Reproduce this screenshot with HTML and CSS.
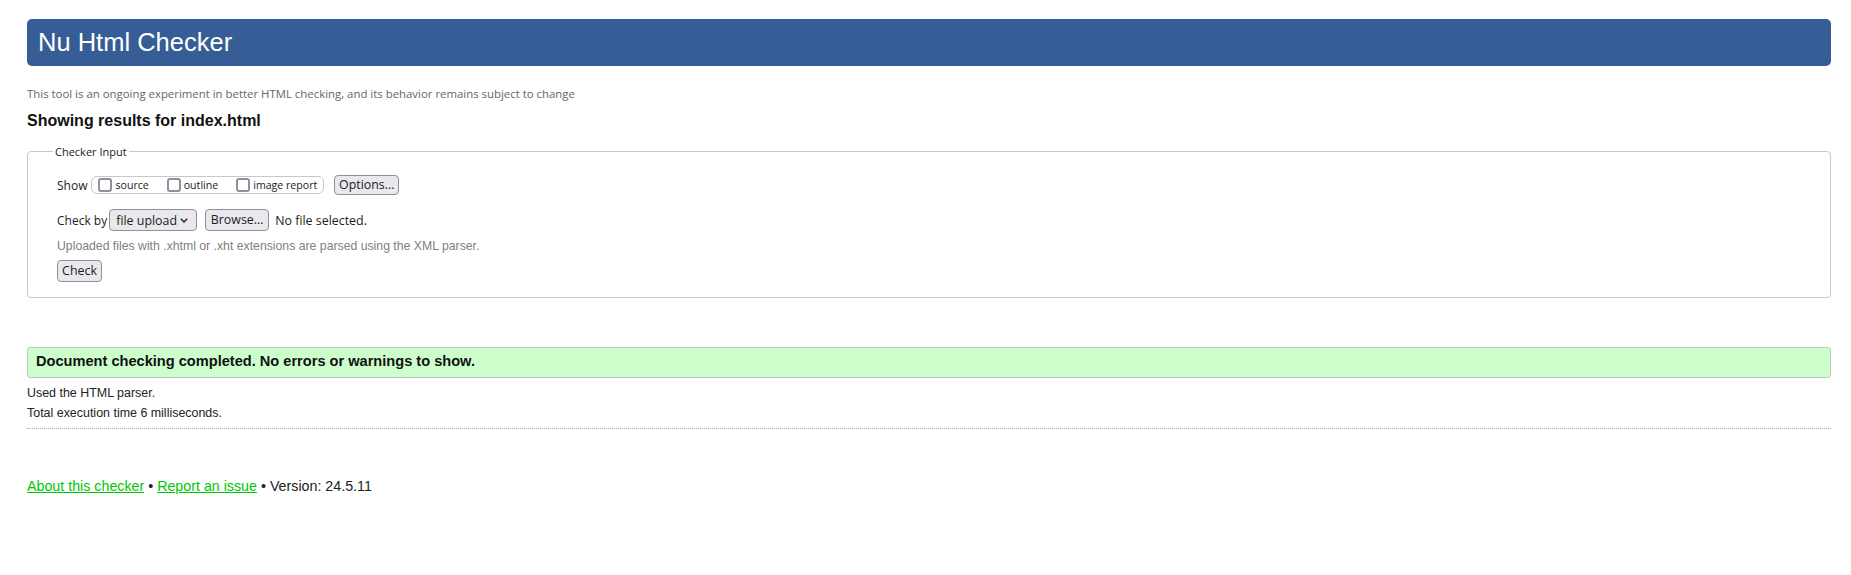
FILE: index.html
```html
<!DOCTYPE html>
<html lang="en">
<head>
<meta charset="utf-8">
<title>Showing results for index.html - Nu Html Checker</title>
<link rel="stylesheet" href="styles.css">
</head>
<body>
<h1 class="title">Nu Html Checker</h1>
<p class="tagline">This tool is an ongoing experiment in better HTML checking, and its behavior remains subject to change</p>
<h2 class="results-for">Showing results for index.html</h2>
<form class="checker-form">
  <fieldset class="checker-input">
    <legend class="legend">Checker Input</legend>
    <div class="row show-row">
      <span class="row-label">Show</span>
      <span class="option-group">
        <label class="option"><input class="cb" type="checkbox">source</label>
        <label class="option"><input class="cb" type="checkbox">outline</label>
        <label class="option"><input class="cb" type="checkbox">image report</label>
      </span>
      <button type="button" class="btn btn-options">Options...</button>
    </div>
    <div class="row checkby-row">
      <span class="row-label">Check by</span>
      <span class="select">file upload
        <svg class="chev" width="8" height="5" viewBox="0 0 8 5"><path d="M0.8 0.8 L4 4 L7.2 0.8" fill="none" stroke="#1c1b22" stroke-width="1.3"/></svg>
      </span>
      <button type="button" class="btn btn-browse">Browse...</button>
      <span class="file-status">No file selected.</span>
    </div>
    <p class="hint">Uploaded files with .xhtml or .xht extensions are parsed using the XML parser.</p>
    <button type="button" class="btn btn-check">Check</button>
  </fieldset>
</form>
<div class="success">Document checking completed. No errors or warnings to show.</div>
<p class="details">Used the HTML parser.</p>
<p class="details">Total execution time 6 milliseconds.</p>
<hr class="rule">
<p class="footer"><a href="#">About this checker</a> • <a href="#">Report an issue</a> • Version: 24.5.11</p>
</body>
</html>
```
FILE: styles.css
```css
* { box-sizing: border-box; }
html, body { margin: 0; padding: 0; background: #fff; }
body {
  padding: 19px 20px 40px 27px;
  font-family: "Liberation Sans", Arial, sans-serif;
  font-size: 12px;
  color: #222;
}
.title {
  margin: 0;
  height: 47px;
  padding: 0 11px;
  background: #365d95;
  color: #fff;
  border-radius: 5px;
  font: 400 25.5px/47px "Liberation Sans", Arial, sans-serif;
}
.tagline {
  margin: 20px 0 0;
  font: 11.4px/15px "Open Sans", sans-serif;
  color: #666;
}
.results-for {
  margin: 11px 0 0;
  font: bold 16px/18px "Liberation Sans", Arial, sans-serif;
  color: #111;
}
.checker-form { margin: 0; }
.checker-input {
  margin: 14px 0 0;
  padding: 0 20px 15px 29px;
  border: 1px solid #c8c8c8;
  border-radius: 4px;
  min-width: 0;
}
.legend {
  padding: 0 2px;
  margin-left: -4px;
  font: 11px/15px "Open Sans", sans-serif;
  color: #222;
}
.row {
  display: flex;
  align-items: center;
  font-family: "Open Sans", sans-serif;
  white-space: nowrap;
}
.row-label { font-size: 12px; color: #222; }
.show-row { margin-top: 16px; height: 20px; }
.show-row .row-label { margin-right: 4px; }
.option-group {
  display: flex;
  align-items: center;
  flex-shrink: 0;
  gap: 18px;
  height: 18px;
  padding: 0 6px;
  border: 1px solid #c8c8c8;
  border-radius: 6px;
}
.option {
  display: flex;
  align-items: center;
  flex-shrink: 0;
  gap: 3px;
  font-size: 10.6px;
  color: #222;
}
.cb {
  appearance: none;
  -webkit-appearance: none;
  flex-shrink: 0;
  margin: 0;
  width: 14px;
  height: 14px;
  border: 2px solid #8f8f9d;
  border-radius: 3px;
  background: #fff;
}
.btn {
  appearance: none;
  flex-shrink: 0;
  font-family: "Open Sans", sans-serif;
  font-size: 12.4px;
  color: #1c1b22;
  background: #e9e9ed;
  border: 1px solid #8f8f9d;
  border-radius: 4px;
  padding: 0;
  line-height: 1;
  text-align: center;
}
.btn-options { margin-left: 10px; width: 65px; height: 20px; }
.checkby-row { margin-top: 14px; height: 22px; }
.checkby-row .row-label { margin-right: 2px; }
.select {
  display: flex;
  align-items: center;
  justify-content: space-between;
  flex-shrink: 0;
  width: 88px;
  height: 22px;
  padding: 0 8px 0 6px;
  font-size: 12.4px;
  color: #1c1b22;
  background: #e9e9ed;
  border: 1px solid #8f8f9d;
  border-radius: 4px;
}
.btn-browse { margin-left: 8px; width: 64px; height: 22px; }
.file-status { margin-left: 6px; font-size: 12.4px; color: #1c1b22; }
.hint {
  margin: 8px 0 0;
  font: 12.25px/14px "Liberation Sans", Arial, sans-serif;
  color: #808080;
}
.btn-check { margin-top: 7px; width: 45px; height: 22px; }
.success {
  margin-top: 49px;
  padding: 5px 8px 7px;
  background: #ccffcc;
  border: 1px solid #c4c4c4;
  border-radius: 3px;
  font: bold 14.6px/17px "Liberation Sans", Arial, sans-serif;
  color: #111;
}
.details {
  margin: 0;
  font: 12.45px/20px "Liberation Sans", Arial, sans-serif;
  color: #222;
}
.success + .details { margin-top: 5px; }
.rule {
  margin: 5px 0 0;
  height: 0;
  border: 0;
  border-top: 1px dotted #aaa;
}
.footer {
  margin: 49px 0 0;
  font: 14.25px/16px "Liberation Sans", Arial, sans-serif;
  color: #222;
}
.footer a { color: #00c800; }
```
